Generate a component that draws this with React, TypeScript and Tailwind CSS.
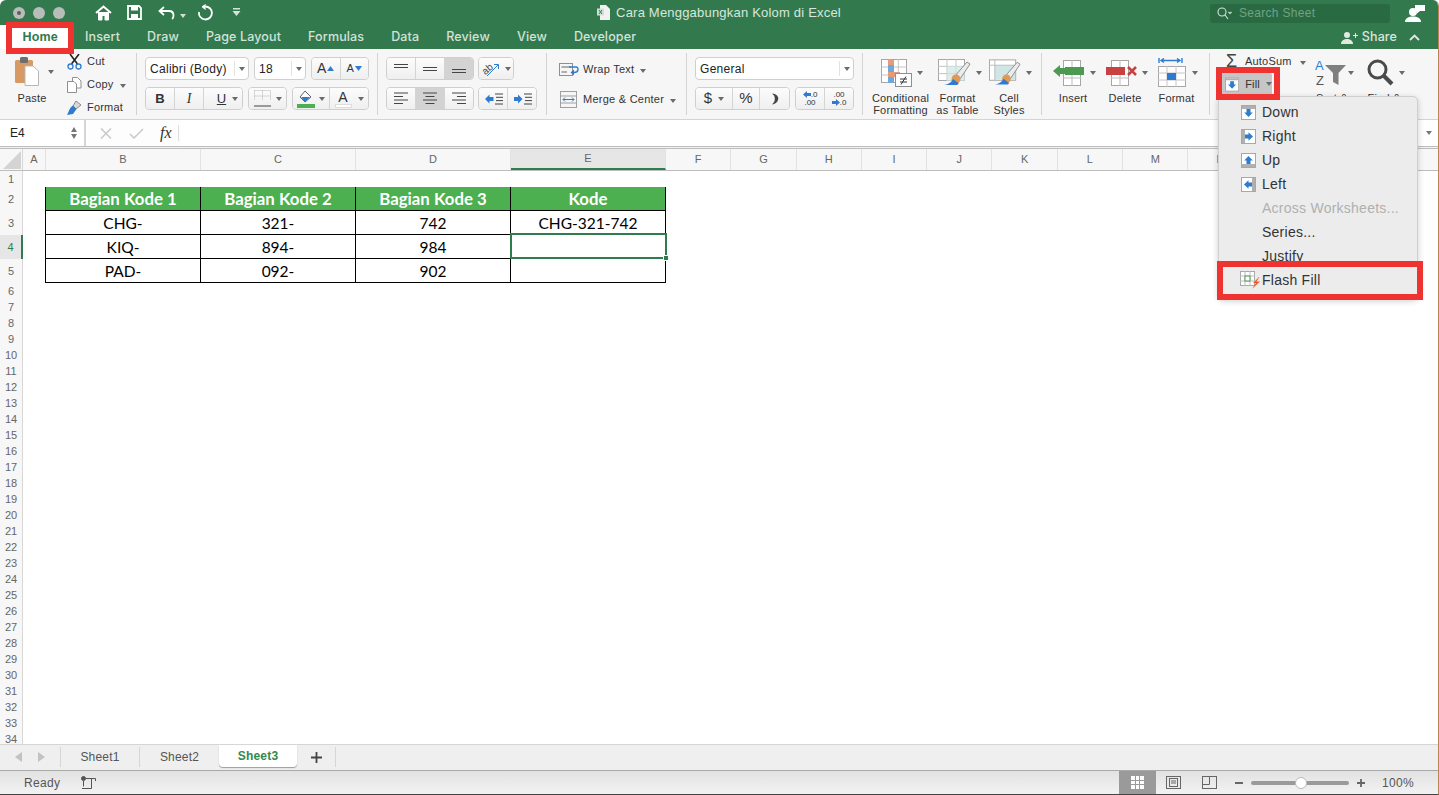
import type { ReactNode } from "react";

const COLS = "grid grid-cols-[23px_23px_155px_155px_155px_155px_repeat(12,65.3px)]";
const BTN = "flex items-center justify-center bg-linear-to-b from-[#fcfcfc] to-[#efefef] border-r border-[#d4d4d4] last:border-r-0";
const BOX = "flex h-[23px] overflow-hidden rounded-[4px] border border-[#cfcfcf] bg-[#f4f4f4]";

function Caret({ c = "border-t-[#6b6b6b]" }: { c?: string }) {
  return <span className={"inline-block h-0 w-0 border-x-[3.5px] border-t-[4px] border-x-transparent " + c} />;
}

function Grid({ w = 30, h = 28 }: { w?: number; h?: number }) {
  const x1 = w / 3, x2 = (2 * w) / 3, y1 = h / 3, y2 = (2 * h) / 3;
  return (
    <>
      <rect x=".5" y=".5" width={w - 1} height={h - 1} fill="#fff" stroke="#a6a6a6" />
      <path d={`M${x1} 0V${h}M${x2} 0V${h}M0 ${y1}H${w}M0 ${y2}H${w}`} stroke="#c4c4c4" fill="none" />
    </>
  );
}

function Brush() {
  return (
    <g>
      <path d="M17 17L29 3L32 5L22 20Z" fill="#ececec" stroke="#8d8d8d" />
      <circle cx="18" cy="20" r="4.5" fill="#e19a56" />
      <path d="M15 20C13 24 9 26 4 26L19 26C21 25 21 24 19 23Z" fill="#2f7ccf" />
    </g>
  );
}

function FillIcon({ dir }: { dir: "down" | "right" | "up" | "left" }) {
  const rot = { down: 0, left: 90, up: 180, right: 270 }[dir];
  const bar = {
    down: <rect x="1" y="1" width="13" height="3" fill="#b0b0b0" />,
    up: <rect x="1" y="11" width="13" height="3" fill="#b0b0b0" />,
    right: <rect x="1" y="1" width="3" height="13" fill="#b0b0b0" />,
    left: <rect x="11" y="1" width="3" height="13" fill="#b0b0b0" />,
  }[dir];
  return (
    <svg width="15" height="15" viewBox="0 0 15 15">
      <rect x=".5" y=".5" width="14" height="14" fill="#fff" stroke="#a8a8a8" />
      {bar}
      <g transform={`rotate(${rot} 7.5 7.5)`}>
        <path d="M5.5 4H9.5V7.5H11.8L7.5 12L3.2 7.5H5.5Z" fill="#2f7ccf" />
      </g>
    </svg>
  );
}

function BigCol({ w, pad, icon, label }: { w: string; pad: string; icon: ReactNode; label: string[] }) {
  return (
    <div className={"flex shrink-0 flex-col items-center " + w}>
      <div className={"flex h-[43px] w-full items-center gap-[5px] pt-1 " + pad}>
        {icon}
        <Caret />
      </div>
      {label.map((l) => (
        <div key={l} className="h-3 whitespace-nowrap text-[11px] leading-3 tracking-[0.2px] text-[#333]">{l}</div>
      ))}
    </div>
  );
}

function TitleBar() {
  return (
    <div className="grid h-[25px] grid-cols-[1fr_auto_1fr] items-center">
      <div className="flex items-center">
        <div className="ml-[13px] flex gap-[8px]">
          <span className="flex h-3 w-3 items-center justify-center rounded-full bg-[#b9bdba]">
            <span className="h-1 w-1 rounded-full bg-[#5b5f5c]" />
          </span>
          <span className="h-3 w-3 rounded-full bg-[#b9bdba]" />
          <span className="h-3 w-3 rounded-full bg-[#b9bdba]" />
        </div>
        <svg className="ml-[30px]" width="17" height="16" viewBox="0 0 17 16" fill="none" stroke="#fff" strokeWidth="2">
          <path d="M1 8L8.5 1.5L16 8" />
          <path d="M3.5 7V15H7V10.5H10V15H13.5V7" fill="#fff" strokeWidth="1" />
        </svg>
        <svg className="ml-[15px]" width="15" height="15" viewBox="0 0 15 15">
          <path d="M1 1H12L14 3V14H1Z" fill="none" stroke="#fff" strokeWidth="1.8" />
          <rect x="4" y="1" width="7" height="4.5" fill="#fff" />
          <rect x="4" y="9" width="7" height="5" fill="#fff" />
        </svg>
        <svg className="ml-[16px]" width="17" height="14" viewBox="0 0 17 14" fill="none" stroke="#fff" strokeWidth="1.8">
          <path d="M6 1L1.5 5L6 9" />
          <path d="M2 5H11C14 5 15.5 7 15.5 9.5C15.5 11 15 12.5 14 13" />
        </svg>
        <span className="ml-[5px]"><Caret c="border-t-[#cfe0d5]" /></span>
        <svg className="ml-[11px]" width="16" height="17" viewBox="0 0 16 17" fill="none" stroke="#fff" strokeWidth="1.8">
          <path d="M8 2.5A6.5 6.5 0 1 1 2 8" />
          <path d="M8.5 .5L5 2.8L8.5 5.5" fill="#fff" strokeWidth="1" />
        </svg>
        <svg className="ml-[19px]" width="9" height="9" viewBox="0 0 9 9">
          <rect x="1" y="0" width="7" height="1.5" fill="#d5e3da" />
          <path d="M0.5 3H8.5L4.5 8Z" fill="#d5e3da" />
        </svg>
      </div>
      <div className="flex items-center gap-[6px] text-[13px] tracking-[0.2px] text-[#d9e6dd]">
        <svg width="13" height="15" viewBox="0 0 13 15">
          <path d="M3 0H9L13 4V15H3Z" fill="#f2f2f2" />
          <rect x="0" y="3.5" width="7" height="7" fill="#cfe0d5" />
          <path d="M2 5L5 9M5 5L2 9" stroke="#2f7a4f" />
        </svg>
        Cara Menggabungkan Kolom di Excel
      </div>
      <div className="flex items-center justify-end pt-px">
        <div className="flex h-[19px] w-[180px] items-center rounded-[3px] bg-[#2a6a43] pl-[7px] text-[12px] tracking-[0.3px] text-[#6fa385]">
          <svg width="15" height="13" viewBox="0 0 15 13" fill="none" stroke="#d7e4db" strokeWidth="1.1">
            <circle cx="5" cy="5" r="4" />
            <path d="M8 8L11 12" />
            <path d="M11.5 5L13 6.5L14.5 5" />
          </svg>
          <span className="ml-[7px]">Search Sheet</span>
        </div>
        <svg className="mr-[13px] ml-[15px]" width="20" height="19" viewBox="0 0 20 19" fill="#fff">
          <circle cx="8" cy="8" r="4" />
          <path d="M0 18C0 14 4 12.5 8 12.5C12 12.5 16 14 16 18Z" />
          <path d="M10 1H20V7H15L12 9.5V7H10Z" />
        </svg>
      </div>
    </div>
  );
}

function TabRow() {
  const tabs = ["Insert", "Draw", "Page Layout", "Formulas", "Data", "Review", "View", "Developer"];
  return (
    <div className="flex h-[24px] items-center">
      <div className="flex h-[24px] w-[73px] items-center justify-end bg-white pr-[15px] pl-[12px]">
        <div className="text-[12.5px] font-bold tracking-[0.2px] text-[#2f7a4f]">Home</div>
      </div>
      <div className="ml-[12px] flex gap-[27px] font-['Inter',sans-serif] text-[12.5px] font-medium tracking-[0.13px] text-[#d3e2d8]">
        {tabs.map((t) => (
          <span key={t}>{t}</span>
        ))}
      </div>
      <div className="ml-auto flex items-center text-[#d9e6dd]">
        <svg width="17" height="13" viewBox="0 0 17 13" fill="#e0eae3">
          <circle cx="6" cy="4" r="3" />
          <path d="M0 13C0 9.5 3 8 6 8C9 8 12 9.5 12 13Z" />
          <path d="M12 4H14V2H15V4H17V5H15V7H14V5H12Z" />
        </svg>
        <span className="ml-[4px] font-['Inter',sans-serif] text-[12.5px] font-medium tracking-[0.1px]">Share</span>
        <svg className="mr-[18px] ml-[12px]" width="11" height="7" viewBox="0 0 11 7" fill="none" stroke="#e0eae3" strokeWidth="1.8">
          <path d="M1 6L5.5 1.5L10 6" />
        </svg>
      </div>
    </div>
  );
}

function Group({ w, children }: { w: string; children: ReactNode }) {
  return (
    <div className={"relative shrink-0 after:absolute after:top-[4px] after:right-0 after:h-[62px] after:w-px after:bg-[#d3d3d3] " + w}>{children}</div>
  );
}

function Clipboard() {
  return (
    <Group w="flex w-[137px]">
      <div className="flex w-[64px] flex-col items-center pt-[8px]">
        <div className="flex w-full items-center gap-[9px] pl-[15px]">
          <svg width="24" height="29" viewBox="0 0 24 29">
            <rect x="0" y="3" width="18" height="23" rx="1.5" fill="#d79a62" />
            <rect x="5" y="0" width="8" height="6" rx="1.5" fill="#6f6f6f" />
            <path d="M10 9H18L23.5 14V28.5H10Z" fill="#fff" stroke="#b8b8b8" />
          </svg>
          <Caret />
        </div>
        <div className="mt-[6px] text-[11px] leading-3 tracking-[0.2px] text-[#333]">Paste</div>
      </div>
      <div className="flex flex-col pt-px pl-[3px] text-[11px] tracking-[0.2px] text-[#333]">
        <div className="flex h-[23px] items-center gap-[5px]">
          <svg width="15" height="16" viewBox="0 0 15 16" fill="none">
            <path d="M3 0L10.5 10M12 0L4.5 10" stroke="#222" strokeWidth="1.6" />
            <circle cx="3.5" cy="12.5" r="2.5" stroke="#2f7ccf" strokeWidth="1.3" />
            <circle cx="11.5" cy="12.5" r="2.5" stroke="#2f7ccf" strokeWidth="1.3" />
          </svg>
          Cut
        </div>
        <div className="flex h-[23px] items-center gap-[5px]">
          <svg width="15" height="16" viewBox="0 0 15 16" fill="#fff" stroke="#8f8f8f">
            <path d="M5.5 .5H10.5L14 4V11H5.5Z" />
            <path d="M.5 4.5H7L9.5 7V15.5H.5Z" />
          </svg>
          Copy
          <span className="ml-[2px]"><Caret /></span>
        </div>
        <div className="flex h-[23px] items-center gap-[5px]">
          <svg width="15" height="15" viewBox="0 0 15 15">
            <path d="M9 1L14 5L9 9L6 6Z" fill="#d9d9d9" stroke="#8a8a8a" />
            <path d="M6 5.5L9.5 9L6 14L0 15C2 12 2 8 6 5.5Z" fill="#2f7ccf" />
          </svg>
          Format
        </div>
      </div>
    </Group>
  );
}

function Select({ w, text, size = "text-[12px]" }: { w: string; text: string; size?: string }) {
  return (
    <div className={"flex h-[23px] items-center justify-between rounded-[4px] border border-[#cfcfcf] bg-white pl-[4px] " + w + " " + size}>
      <span className="tracking-[0.3px] text-[#222]">{text}</span>
      <span className="flex h-[15px] w-[14px] items-center justify-center border-l border-[#e2e2e2]"><Caret /></span>
    </div>
  );
}

function FontGroup() {
  return (
    <Group w="flex w-[241px] flex-col gap-[7px] pt-[8px] pl-[8px]">
      <div className="flex gap-[5px]">
        <Select w="w-[104px]" text="Calibri (Body)" />
        <Select w="w-[52px]" text="18" />
        <div className={BOX + " w-[58px]"}>
          <div className={BTN + " flex-1 gap-px text-[14px] text-[#333]"}>A<svg width="7" height="5"><path d="M0 5H7L3.5 0Z" fill="#2f7ccf" /></svg></div>
          <div className={BTN + " flex-1 gap-px text-[11px] text-[#333]"}>A<svg width="7" height="5"><path d="M0 0H7L3.5 5Z" fill="#2f7ccf" /></svg></div>
        </div>
      </div>
      <div className="flex gap-[5px]">
        <div className={BOX + " w-[98px]"}>
          <div className={BTN + " w-[29px] text-[13px] font-bold text-[#333]"}>B</div>
          <div className={BTN + " w-[29px] font-['Liberation_Serif',serif] text-[14px] italic text-[#333]"}>I</div>
          <div className={BTN + " flex-1 gap-[6px] pl-[9px] text-[13px] text-[#333]"}><span className="underline">U</span><Caret /></div>
        </div>
        <div className={BOX + " w-[39px]"}>
          <div className={BTN + " flex-1 gap-[5px]"}>
            <svg width="17" height="17" viewBox="0 0 17 17" fill="none">
              <path d="M.5 .5H16.5V10M.5 .5V10M8.5 .5V10M.5 6H16.5" stroke="#b5b5b5" strokeDasharray="1 1" />
              <path d="M0 16H17" stroke="#444" strokeWidth="1.2" />
            </svg>
            <Caret />
          </div>
        </div>
        <div className={BOX + " w-[77px]"}>
          <div className={BTN + " w-[37px] gap-[4px]"}>
            <svg width="18" height="18" viewBox="0 0 18 18">
              <path d="M8 1L14 7L8 12L3 7Z" fill="#fff" stroke="#666" />
              <path d="M4 7L13 7L8 12Z" fill="#2f7ccf" />
              <rect x="0" y="14" width="18" height="4" fill="#4caf50" />
            </svg>
            <Caret />
          </div>
          <div className={BTN + " flex-1 gap-[6px]"}>
            <div className="flex w-[17px] flex-col items-center text-[14px] leading-[14px] text-[#333]">A<span className="h-[4px] w-[17px] border border-[#ddd] bg-white" /></div>
            <Caret />
          </div>
        </div>
      </div>
    </Group>
  );
}

function Lines({ a, w = 14 }: { a: "l" | "c" | "r"; w?: number }) {
  const d = {
    l: "M0 1H14M0 4.5H9M0 8H14M0 11.5H9",
    c: "M0 1H14M2.5 4.5H11.5M0 8H14M2.5 11.5H11.5",
    r: "M0 1H14M5 4.5H14M0 8H14M5 11.5H14",
  }[a];
  return <svg width={w} height="13" viewBox="0 0 14 13"><path d={d} stroke="#444" fill="none" /></svg>;
}

function Indent({ flip }: { flip?: boolean }) {
  return (
    <svg width="19" height="12" viewBox="0 0 19 12">
      <path d={flip ? "M1 4H5V1.5L9.5 6L5 10.5V8H1Z" : "M9.5 4H5.5V1.5L1 6L5.5 10.5V8H9.5Z"} fill="#2f7ccf" />
      <path d="M11 1H19M12 4.3H19M12 7.6H19M11 11H19" stroke="#444" />
    </svg>
  );
}

function AlignGroup() {
  const tops = ["items-start pt-[6px]", "items-center", "items-end pb-[6px]"];
  return (
    <Group w="flex w-[169px] flex-col gap-[7px] pt-[8px] pl-[8px]">
      <div className="flex gap-[4px]">
        <div className={BOX + " w-[88px]"}>
          {tops.map((t, i) => (
            <div key={t} className={"flex flex-1 justify-center border-r border-[#d4d4d4] last:border-r-0 " + t + (i === 2 ? " bg-[#d3d3d3]" : " bg-linear-to-b from-[#fcfcfc] to-[#efefef]")}>
              <span className="h-[4px] w-[14px] border-y border-[#444]" />
            </div>
          ))}
        </div>
        <div className={BOX + " w-[36px]"}>
          <div className={BTN + " flex-1 gap-[4px]"}>
            <svg width="20" height="16" viewBox="0 0 20 16">
              <text x="1" y="11" transform="rotate(-40 7 8)" fontSize="10" fill="#444" fontFamily="Liberation Sans">ab</text>
              <path d="M6 15L17 4M13 3.5H17.5V8" stroke="#2f7ccf" fill="none" />
            </svg>
            <Caret />
          </div>
        </div>
      </div>
      <div className="flex gap-[4px]">
        <div className={BOX + " w-[88px]"}>
          <div className={BTN + " flex-1"}><Lines a="l" /></div>
          <div className="flex flex-1 items-center justify-center border-r border-[#d4d4d4] bg-[#d3d3d3]"><Lines a="c" /></div>
          <div className={BTN + " flex-1"}><Lines a="r" /></div>
        </div>
        <div className={BOX + " w-[59px]"}>
          <div className={BTN + " flex-1"}><Indent /></div>
          <div className={BTN + " flex-1"}><Indent flip /></div>
        </div>
      </div>
    </Group>
  );
}

function WrapGroup() {
  return (
    <Group w="flex w-[140px] flex-col pt-[9px] pl-[12px] text-[11px] tracking-[0.25px] text-[#333]">
      <div className="flex h-[23px] items-center">
        <svg width="21" height="13" viewBox="0 0 21 13" fill="none">
          <rect x=".5" y=".5" width="13" height="12" stroke="#8f8f8f" />
          <path d="M2.5 4H12M2.5 9H8" stroke="#666" />
          <path d="M10 4H17C20 4 20 9.5 15 9.5H13" stroke="#2f7ccf" strokeWidth="1.4" />
          <path d="M15 6.5L11.5 9.5L15 12.5Z" fill="#2f7ccf" />
        </svg>
        <span className="ml-[3px]">Wrap Text</span>
        <span className="ml-[6px]"><Caret /></span>
      </div>
      <div className="mt-[7px] flex h-[23px] items-center">
        <svg width="17" height="17" viewBox="0 0 17 17" fill="none" className="mr-[4px] ml-px">
          <rect x=".5" y=".5" width="16" height="16" stroke="#a0a0a0" />
          <path d="M.5 5H16.5M.5 12H16.5" stroke="#a0a0a0" />
          <path d="M3 8.5H14M5 6.5L3 8.5L5 10.5M12 6.5L14 8.5L12 10.5" stroke="#2f7ccf" />
        </svg>
        <span className="ml-[2px]">Merge &amp; Center</span>
        <span className="ml-[6px]"><Caret /></span>
      </div>
    </Group>
  );
}

function NumberGroup() {
  return (
    <Group w="flex w-[176px] flex-col gap-[7px] pt-[8px] pl-[8px]">
      <Select w="w-[159px]" text="General" />
      <div className="flex gap-[5px]">
        <div className={BOX + " w-[95px]"}>
          <div className={BTN + " w-[37px] gap-[6px] text-[15px] text-[#333]"}>$<Caret /></div>
          <div className={BTN + " flex-1 text-[15px] text-[#333]"}>%</div>
          <div className={BTN + " w-[29px]"}>
            <svg width="8" height="12" viewBox="0 0 8 12"><path d="M1 .5C6 1 8 4 7 7C6.3 9.5 4 11 1 11.5C3 9.5 4 8 3.8 5.5C3.7 3.5 3 2 1 .5Z" fill="#444" /></svg>
          </div>
        </div>
        <div className={BOX + " w-[59px]"}>
          <div className={BTN + " flex-1 flex-col text-[8px] leading-[8px] text-[#333]"}>
            <span className="flex items-center"><svg width="8" height="7"><path d="M0 3.5L4 0V2H8V5H4V7Z" fill="#2f7ccf" /></svg>.0</span>
            <span>.00</span>
          </div>
          <div className={BTN + " flex-1 flex-col text-[8px] leading-[8px] text-[#333]"}>
            <span>.00</span>
            <span className="flex items-center"><svg width="8" height="7"><path d="M8 3.5L4 0V2H0V5H4V7Z" fill="#2f7ccf" /></svg>.0</span>
          </div>
        </div>
      </div>
    </Group>
  );
}

function StylesGroup() {
  return (
    <Group w="flex w-[179px] pl-[9px]">
      <BigCol
        w="w-[57px]"
        pad="pl-[9px]"
        label={["Conditional", "Formatting"]}
        icon={
          <svg width="31" height="28" viewBox="0 0 31 28">
            <Grid w={26} h={24} />
            <rect x="7" y="1" width="6" height="5" fill="#e59b77" />
            <rect x="7" y="6" width="6" height="7" fill="#6fa8dc" />
            <rect x="7" y="13" width="12" height="5" fill="#e59b77" />
            <rect x="7" y="18" width="6" height="6" fill="#6fa8dc" />
            <rect x="14.5" y="14.5" width="16" height="13" fill="#fff" stroke="#8f8f8f" />
            <path d="M19 20H26M19 23H26M25 17.5L20 25.5" stroke="#333" fill="none" />
          </svg>
        }
      />
      <BigCol
        w="w-[57px]"
        pad="pl-[9px]"
        label={["Format", "as Table"]}
        icon={
          <svg width="33" height="27" viewBox="0 0 33 27">
            <Grid w={27} h={22} />
            <rect x="9" y="7" width="18" height="15" fill="#cfe6e4" fillOpacity=".7" />
            <Brush />
          </svg>
        }
      />
      <BigCol
        w="w-[46px]"
        pad="pl-[3px]"
        label={["Cell", "Styles"]}
        icon={
          <svg width="33" height="27" viewBox="0 0 33 27">
            <rect x=".5" y=".5" width="27" height="21" fill="#fff" stroke="#a6a6a6" />
            <rect x="6" y="6" width="21" height="15" fill="#cfe6e4" />
            <path d="M6 0V22M0 6H28" stroke="#bdbdbd" />
            <Brush />
          </svg>
        }
      />
    </Group>
  );
}

function CellsGroup() {
  return (
    <Group w="flex w-[168px] pl-[5px]">
      <BigCol
        w="w-[52px]"
        pad="pl-[6px]"
        label={["Insert"]}
        icon={
          <svg width="32" height="26" viewBox="0 0 32 26">
            <rect x="10.5" y=".5" width="17" height="25" fill="#fff" stroke="#a6a6a6" />
            <path d="M19 0V26M10 18H28" stroke="#bdbdbd" />
            <rect x="12" y="7" width="19" height="8" fill="#4b9a50" />
            <path d="M0 11L7 5V8H12V14H7V17Z" fill="#4b9a50" />
          </svg>
        }
      />
      <BigCol
        w="w-[52px]"
        pad="pl-[7px]"
        label={["Delete"]}
        icon={
          <svg width="31" height="26" viewBox="0 0 31 26">
            <rect x="5.5" y=".5" width="17" height="25" fill="#fff" stroke="#a6a6a6" />
            <path d="M14 0V26M5 18H23" stroke="#bdbdbd" />
            <rect x="0" y="7" width="19" height="8" fill="#c8403f" />
            <path d="M22 7L30 15M30 7L22 15" stroke="#c8403f" strokeWidth="2.5" />
          </svg>
        }
      />
      <BigCol
        w="w-[51px]"
        pad="pl-[7px]"
        label={["Format"]}
        icon={
          <svg width="29" height="29" viewBox="0 0 29 29">
            <path d="M1 0V5M24 0V5M3 2.5H22M6 .5L3 2.5L6 4.5M19 .5L22 2.5L19 4.5" stroke="#2f7ccf" fill="none" strokeWidth="1.4" />
            <g transform="translate(0 8)"><rect x=".5" y=".5" width="27" height="20" fill="#fff" stroke="#a6a6a6" /><path d="M9 0V21M18 0V21M0 7H28M0 14H28" stroke="#c6c6c6" /><rect x="9" y="7" width="9" height="7" fill="#2f7ccf" /></g>
          </svg>
        }
      />
    </Group>
  );
}

function EditGroup() {
  return (
    <div className="flex flex-1 pl-[11px]">
      <div className="w-[88px] text-[11px] tracking-[0.2px] text-[#333]">
        <div className="flex h-[24px] items-center pl-[5px]">
          <span className="w-[19px] text-[18px] leading-none text-[#444]">Σ</span>
          AutoSum
          <span className="ml-[8px]"><Caret /></span>
        </div>
        <div className="flex h-[22px] w-[51px] items-center gap-[6px] rounded-[2px] bg-[#c6c6c6] pl-[4px]">
          <svg width="15" height="15" viewBox="0 0 15 15">
            <rect x=".5" y=".5" width="14" height="14" fill="#fff" stroke="#a8a8a8" />
            <rect x="1" y="1" width="13" height="2" fill="#b0b0b0" />
            <path d="M5.5 4H9.5V7.5H11.8L7.5 12L3.2 7.5H5.5Z" fill="#2f7ccf" />
          </svg>
          <span>Fill</span>
          <Caret />
        </div>
      </div>
      <div className="flex w-[46px] flex-col items-center">
        <div className="flex h-[43px] w-full items-center gap-[2px] pt-1 pl-[6px]">
          <svg width="31" height="30" viewBox="0 0 31 30">
            <text x="0" y="12" fontSize="13" fontFamily="Liberation Sans" fill="#2f7ccf">A</text>
            <text x="1" y="27" fontSize="13" fontFamily="Liberation Sans" fill="#555">Z</text>
            <path d="M10 7H31L23.5 15V27L18 24V15Z" fill="#7f7f7f" />
          </svg>
          <Caret />
        </div>
        <div className="text-[11px] leading-3 tracking-[0.2px] text-[#333]">Sort &amp;</div>
      </div>
      <div className="ml-[4px] flex w-[50px] flex-col items-center">
        <div className="flex h-[43px] w-full items-center gap-[5px] pt-1 pl-[8px]">
          <svg width="27" height="27" viewBox="0 0 27 27" fill="none" stroke="#4a4a4a">
            <circle cx="10.5" cy="10.5" r="8.5" strokeWidth="3" />
            <path d="M17 17L25 25" strokeWidth="4" />
          </svg>
          <Caret />
        </div>
        <div className="text-[11px] leading-3 tracking-[0.2px] text-[#333]">Find &amp;</div>
      </div>
    </div>
  );
}

function FormulaBar() {
  return (
    <div className="flex h-[26px] items-stretch bg-white">
      <div className="flex w-[86px] items-center justify-between border-r-2 border-[#d5d5d5] pr-[7px] pl-[10px] text-[12px] text-[#222]">
        E4
        <span className="flex flex-col gap-[2px]">
          <span className="block h-0 w-0 border-x-[3.5px] border-b-[5px] border-x-transparent border-b-[#777]" />
          <span className="block h-0 w-0 border-x-[3.5px] border-t-[5px] border-x-transparent border-t-[#777]" />
        </span>
      </div>
      <div className="flex w-[95px] items-center bg-[#fdfdfd] pl-[14px]">
        <svg width="12" height="11" viewBox="0 0 12 11"><path d="M1 .5L11 10.5M11 .5L1 10.5" stroke="#c9c9c9" strokeWidth="1.5" /></svg>
        <svg className="ml-[17px]" width="15" height="11" viewBox="0 0 15 11" fill="none"><path d="M1 6L5 10L14 1" stroke="#c9c9c9" strokeWidth="1.5" /></svg>
        <span className="ml-[16px] font-['Liberation_Serif',serif] text-[16px] italic text-[#333]">fx</span>
        <span className="ml-[6px] h-[16px] w-px bg-[#ddd]" />
      </div>
      <div className="flex flex-1 items-center justify-end pr-[6px]">
        <Caret c="border-t-[#777]" />
      </div>
    </div>
  );
}

function ColHeaders() {
  const letters = ["A", "B", "C", "D", "E", "F", "G", "H", "I", "J", "K", "L", "M", "N", "O", "P"];
  return (
    <div className={COLS + " h-[22px] border-b border-[#bdbdbd] bg-[#f7f7f7] text-[11px] text-[#666]"}>
      <div className="border-r border-[#d8d8d8]">
        <svg width="22" height="21" viewBox="0 0 22 21"><path d="M21 2V20H3Z" fill="#d4d4d4" /></svg>
      </div>
      {letters.map((l) => (
        <div
          key={l}
          className={
            "flex h-[21px] items-center justify-center border-r border-[#e2e2e2] " +
            (l === "E" ? "border-b-2 border-b-[#2f7d4f] bg-[#e6e6e6]" : "")
          }
        >
          {l}
        </div>
      ))}
    </div>
  );
}

const TABLE: Record<number, string[]> = {
  2: ["Bagian Kode 1", "Bagian Kode 2", "Bagian Kode 3", "Kode"],
  3: ["CHG-", "321-", "742", "CHG-321-742"],
  4: ["KIQ-", "894-", "984", ""],
  5: ["PAD-", "092-", "902", ""],
};

function Sheet() {
  const rows = Array.from({ length: 34 }, (_, i) => i + 1);
  return (
    <div className="min-h-0 flex-1 overflow-hidden bg-white">
      {rows.map((r) => {
        const cells = TABLE[r];
        return (
          <div key={r} className={COLS + (cells ? " h-[24px]" : " h-[16px]")}>
            <div
              className={
                "flex items-center justify-center text-[11px] " +
                (r === 4 ? "border-r-2 border-[#2f7d4f] bg-[#e6e6e6] text-[#2f7d4f]" : "border-r border-[#d8d8d8] bg-[#f7f7f7] text-[#666]")
              }
            >
              {r}
            </div>
            <div className={cells ? "border-r border-black" : ""} />
            {r === 1 && [0, 1, 2, 3].map((c) => <div key={c} className="border-b border-black" />)}
            {cells?.map((t, c) => (
              <div
                key={c}
                className={
                  "relative flex h-[24px] items-center justify-center border-r border-b border-black pt-px font-['Lato',sans-serif] leading-5 " +
                  (r === 2 ? "bg-[#4caf50] text-[16.8px] font-bold text-white" : "text-[15.5px] text-black")
                }
              >
                {t}
                {r === 4 && c === 3 && (
                  <span className="absolute -top-[2px] -right-[2px] -bottom-px -left-px z-10 border-2 border-[#2f7d4f]">
                    <span className="absolute -right-[4px] -bottom-[4px] h-[6px] w-[6px] border border-white bg-[#2f7d4f]" />
                  </span>
                )}
              </div>
            ))}
          </div>
        );
      })}
    </div>
  );
}

function SheetTabs() {
  return (
    <div className="flex h-[26px] items-start border-t border-[#d6d6d6] bg-[#efefef] text-[12px] tracking-[0.2px] text-[#555]">
      <div className="mt-[2px] flex h-[20px] w-[61px] items-center border-r border-[#d6d6d6] pl-[15px]">
        <svg width="7" height="10"><path d="M7 0V10L0 5Z" fill="#c2c2c2" /></svg>
        <svg className="ml-[16px]" width="7" height="10"><path d="M0 0V10L7 5Z" fill="#c2c2c2" /></svg>
      </div>
      <div className="mt-[2px] flex h-[20px] w-[79px] items-center justify-center border-r border-[#d6d6d6]">Sheet1</div>
      <div className="mt-[2px] flex h-[20px] w-[79px] items-center justify-center">Sheet2</div>
      <div className="flex h-[22px] w-[78px] items-center justify-center rounded-b-[4px] bg-white font-bold text-[#2f8a50] shadow-[0_1px_1px_rgba(0,0,0,.35)]">Sheet3</div>
      <div className="mt-[2px] flex h-[20px] w-[39px] items-center justify-center border-r border-[#d6d6d6]">
        <svg width="11" height="11"><path d="M5.5 0V11M0 5.5H11" stroke="#444" strokeWidth="1.8" /></svg>
      </div>
    </div>
  );
}

function StatusBar() {
  return (
    <div className="flex h-[24px] items-center border-t border-[#a9a9a9] bg-linear-to-b from-[#e2e2e2] to-[#f2f2f2] text-[12px] tracking-[0.3px] text-[#555]">
      <span className="ml-[24px]">Ready</span>
      <svg className="ml-[21px]" width="15" height="14" viewBox="0 0 15 14" fill="none" stroke="#555">
        <circle cx="2.5" cy="2.5" r="2" fill="#555" />
        <path d="M4.5 2.5H14.5V5M10.5 2.5V12.5M1 12.5H10.5M2.5 5V10.5" />
      </svg>
      <div className="ml-auto flex h-full items-center">
        <div className="flex h-full w-[37px] items-center justify-center bg-[#9a9a9a]">
          <svg width="13" height="13"><path d="M0 0H13V13H0Z" fill="#fff" /><path d="M4.5 0V13M8.5 0V13M0 4.5H13M0 8.5H13" stroke="#9a9a9a" /></svg>
        </div>
        <svg className="ml-[10px]" width="15" height="13" viewBox="0 0 15 13" fill="none" stroke="#666"><rect x=".5" y=".5" width="14" height="12" /><rect x="3.5" y="2.5" width="8" height="8" /><path d="M5 5H10M5 7H10" /></svg>
        <svg className="ml-[21px]" width="15" height="13" viewBox="0 0 15 13" fill="none" stroke="#666"><rect x=".5" y=".5" width="14" height="12" /><path d="M.5 8.5H7.5V.5" /></svg>
        <span className="ml-[18px] h-[2px] w-[8px] bg-[#666]" />
        <div className="relative ml-[8px] h-[4px] w-[98px] rounded-full bg-[#9a9a9a]">
          <span className="absolute -top-[4px] left-[44px] h-[12px] w-[12px] rounded-full border border-[#bbb] bg-white" />
        </div>
        <svg className="ml-[8px]" width="8" height="8"><path d="M4 0V8M0 4H8" stroke="#666" strokeWidth="1.8" /></svg>
        <span className="mr-[24px] ml-[17px]">100%</span>
      </div>
    </div>
  );
}

function FillMenu() {
  const items: { t: string; dir?: "down" | "right" | "up" | "left"; off?: boolean }[] = [
    { t: "Down", dir: "down" },
    { t: "Right", dir: "right" },
    { t: "Up", dir: "up" },
    { t: "Left", dir: "left" },
    { t: "Across Worksheets...", off: true },
    { t: "Series..." },
    { t: "Justify" },
  ];
  return (
    <div className="absolute top-[96px] left-[1218px] w-[200px] rounded-[5px] border border-[#cfcfcf] bg-[#ececec] pt-[3px] pb-[6px] text-[14px] tracking-[0.25px] text-[#333] shadow-[0_2px_6px_rgba(0,0,0,.2)]">
      {items.map((i) => (
        <div key={i.t} className={"flex h-[24px] items-center " + (i.off ? "text-[#b0b0b0]" : "")}>
          <span className="flex w-[43px] justify-end pr-[6px]">{i.dir && <FillIcon dir={i.dir} />}</span>
          {i.t}
        </div>
      ))}
      <div className="flex h-[24px] items-center">
        <span className="flex w-[43px] justify-end pr-[2px]">
          <svg width="20" height="18" viewBox="0 0 20 18">
            <rect x=".5" y=".5" width="14" height="14" fill="#fff" stroke="#a8a8a8" />
            <path d="M5 0V15M10 0V15M0 5H15M0 10H15" stroke="#bdbdbd" />
            <rect x="5" y="5" width="5" height="5" fill="#fff" stroke="#4b9a50" />
            <path d="M19 6L13 12H16L12 18L20 10.5H16.5L19.5 6Z" fill="#f05a28" />
          </svg>
        </span>
        Flash Fill
      </div>
    </div>
  );
}

export default function App() {
  return (
    <div className="relative h-[795px] w-[1439px] overflow-hidden bg-white font-['Liberation_Sans',Arial,sans-serif]">
      <div className="flex h-full flex-col overflow-hidden rounded-t-[6px] border-r border-b border-r-[#b8874e] border-b-[#444]">
        <div className="bg-[#327a4e]">
          <TitleBar />
          <TabRow />
        </div>
        <div className="flex h-[71px] border-b border-[#d4d4d4] bg-[#f6f6f6]">
          <Clipboard />
          <FontGroup />
          <AlignGroup />
          <WrapGroup />
          <NumberGroup />
          <StylesGroup />
          <CellsGroup />
          <EditGroup />
        </div>
        <FormulaBar />
        <div className="h-[3px] border-y border-[#bdbdbd] bg-[#f2f2f2]" />
        <ColHeaders />
        <Sheet />
        <SheetTabs />
        <StatusBar />
      </div>
      <FillMenu />
      <div className="absolute top-[22px] left-[6px] h-[32px] w-[68px] border-[6px] border-[#ef3330]" />
      <div className="absolute top-[67px] left-[1216px] h-[33px] w-[64px] border-[6px] border-[#ef3330]" />
      <div className="absolute top-[261px] left-[1217px] h-[39px] w-[206px] border-[6px] border-[#ef3330]" />
    </div>
  );
}
